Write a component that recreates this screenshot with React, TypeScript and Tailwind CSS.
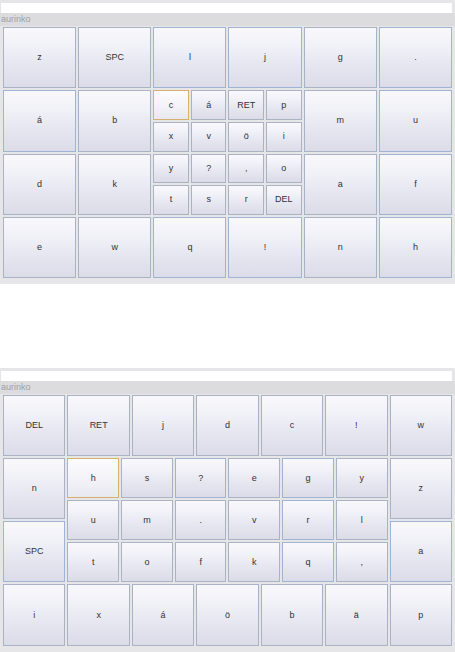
import React from "react";

type K = { t: string; hi?: boolean; blue?: boolean; cls?: string };

function Key({ t, hi, blue, cls = "" }: K) {
  const border = hi
    ? "border-[#d2b26c]"
    : blue
    ? "border-[#9fb3d2]"
    : "border-[#a9b3c4]";
  const bg = hi
    ? "bg-[linear-gradient(to_bottom,#fcfcfe,#f2f2f8_55%,#e8e8f0)]"
    : "bg-[linear-gradient(to_bottom,#f8f8fc_0%,#f1f1f8_30%,#e7e7f1_60%,#dcdce9_100%)]";
  return (
    <div
      className={`flex items-center justify-center border ${border} ${bg} text-[9px] leading-none text-[#333333] ${cls}`}
      style={{ fontFamily: '"Liberation Sans", Arial, sans-serif' }}
    >
      {t}
    </div>
  );
}

function Header() {
  return (
    <>
      <div className="h-[3px]" />
      <div className="h-[10px] bg-white ml-[1px] mr-[3px]" />
      <div
        className="h-[13px] bg-[#dcdcdf] flex items-center pl-[1px] text-[9px] text-[#a0a0a0]"
        style={{ fontFamily: '"Liberation Sans", Arial, sans-serif' }}
      >
        aurinko
      </div>
      <div className="h-[1px]" />
    </>
  );
}

export default function App() {
  return (
    <div className="w-[455px] h-[652px] bg-white overflow-hidden">
      {/* Panel 1 */}
      <div className="bg-[#e6e6e9] pb-[6px]">
        <Header />
        <div className="px-[3px]">
          <div className="grid grid-cols-6 grid-rows-4 gap-[2px] h-[251px]">
            <Key t="z" />
            <Key t="SPC" />
            <Key t="l" blue />
            <Key t="j" blue />
            <Key t="g" />
            <Key t="." blue />

            <Key t="á" blue />
            <Key t="b" />
            <div className="col-span-2 row-span-2 grid grid-cols-4 grid-rows-4 gap-[2px]">
              <Key t="c" hi />
              <Key t="á" />
              <Key t="RET" />
              <Key t="p" />
              <Key t="x" />
              <Key t="v" />
              <Key t="ö" />
              <Key t="i" />
              <Key t="y" />
              <Key t="?" />
              <Key t="," />
              <Key t="o" />
              <Key t="t" />
              <Key t="s" />
              <Key t="r" />
              <Key t="DEL" />
            </div>
            <Key t="m" />
            <Key t="u" blue />

            <Key t="d" />
            <Key t="k" />
            <Key t="a" />
            <Key t="f" blue />

            <Key t="e" />
            <Key t="w" />
            <Key t="q" blue />
            <Key t="!" blue />
            <Key t="n" />
            <Key t="h" blue />
          </div>
        </div>
      </div>

      <div className="h-[84px]" />

      {/* Panel 2 */}
      <div className="bg-[#e6e6e9] pb-[7px]">
        <Header />
        <div className="px-[3px]">
          <div className="grid grid-cols-7 grid-rows-[61px_61px_61px_62px] gap-[2px] h-[251px]">
            <Key t="DEL" />
            <Key t="RET" />
            <Key t="j" />
            <Key t="d" />
            <Key t="c" />
            <Key t="!" />
            <Key t="w" />

            <Key t="n" />
            <div className="col-span-5 row-span-2 grid grid-cols-6 grid-rows-3 gap-[2px]">
              <Key t="h" hi />
              <Key t="s" />
              <Key t="?" blue />
              <Key t="e" />
              <Key t="g" blue />
              <Key t="y" />
              <Key t="u" />
              <Key t="m" />
              <Key t="." />
              <Key t="v" />
              <Key t="r" blue />
              <Key t="l" />
              <Key t="t" />
              <Key t="o" />
              <Key t="f" />
              <Key t="k" />
              <Key t="q" blue />
              <Key t="," />
            </div>
            <Key t="z" />

            <Key t="SPC" blue />
            <Key t="a" blue />

            <Key t="i" />
            <Key t="x" />
            <Key t="á" />
            <Key t="ö" />
            <Key t="b" />
            <Key t="ä" />
            <Key t="p" />
          </div>
        </div>
      </div>
    </div>
  );
}
